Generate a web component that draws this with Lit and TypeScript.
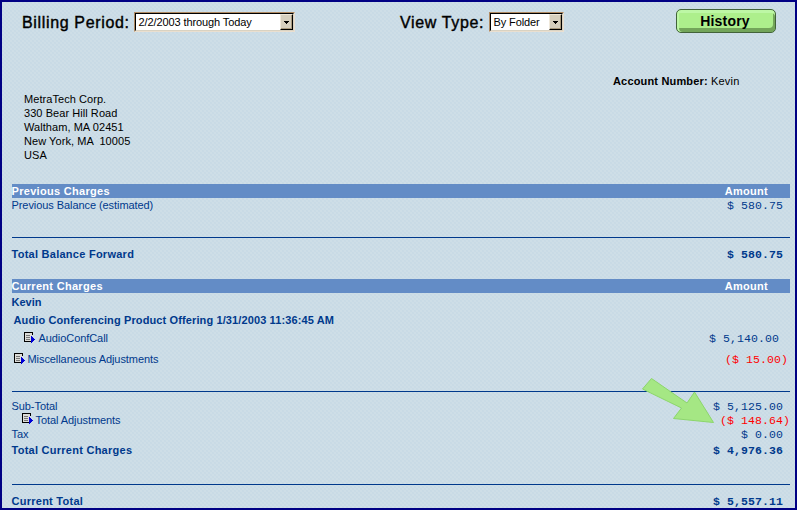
import { LitElement, html, svg, css, nothing } from "lit";
import { customElement, property } from "lit/decorators.js";
import { classMap } from "lit/directives/class-map.js";

interface Line {
  label: string;
  amount?: string;
  kind?: string;
  icon?: boolean;
}

const PREVIOUS: Line[] = [
  { label: "Previous Charges", amount: "Amount", kind: "band" },
  { label: "Previous Balance (estimated)", amount: "$ 580.75" },
];

const CURRENT: Line[] = [
  { label: "Current Charges", amount: "Amount", kind: "band" },
  { label: "Kevin", kind: "folder" },
  { label: "Audio Conferencing Product Offering 1/31/2003 11:36:45 AM", kind: "offering" },
  { label: "AudioConfCall", amount: "$ 5,140.00", kind: "item", icon: true },
  { label: "Miscellaneous Adjustments", amount: "($ 15.00)", kind: "misc", icon: true },
];

const TOTALS: Line[] = [
  { label: "Sub-Total", amount: "$ 5,125.00" },
  { label: "Total Adjustments", amount: "($ 148.64)", kind: "adjust", icon: true },
  { label: "Tax", amount: "$ 0.00" },
  { label: "Total Current Charges", amount: "$ 4,976.36", kind: "total" },
];

@customElement("select-box")
class SelectBox extends LitElement {
  @property() value = "";

  static styles = css`
    :host {
      display: flex;
      box-sizing: border-box;
      height: 20px;
      background: #fff;
      border: 1px solid;
      border-color: #b08a62 #eadfd0 #eadfd0 #b08a62;
    }
    .inner {
      flex: 1;
      display: flex;
      border: 1px solid;
      border-color: #000 #d9d2c2 #d9d2c2 #000;
    }
    .value {
      flex: 1;
      padding-left: 2.5px;
      font: 11px/17px "Liberation Sans", Arial, sans-serif;
      letter-spacing: -0.1px;
      white-space: nowrap;
      color: #000;
    }
    .arrow {
      width: 13px;
      box-sizing: border-box;
      display: flex;
      align-items: center;
      justify-content: center;
      background: #d6cfbe;
      border: 1px solid;
      border-color: #efe8da #000 #000 #efe8da;
      box-shadow: inset -1px -1px #a99a7e;
    }
    svg {
      display: block;
    }
  `;

  render() {
    return html`<div class="inner">
      <span class="value">${this.value}</span>
      <span class="arrow">
        <svg width="5" height="3" shape-rendering="crispEdges"><path d="M0 0h5v1h-1v1h-1v1h-1v-1h-1v-1h-1z" /></svg>
      </span>
    </div>`;
  }
}

@customElement("charge-line")
class ChargeLine extends LitElement {
  @property({ attribute: false }) line: Line = { label: "" };

  static styles = css`
    :host {
      display: block;
    }
    .line {
      display: flex;
      height: 14px;
      padding-right: 7px;
      color: #00398c;
      font: 11px/14px "Liberation Sans", Arial, sans-serif;
      letter-spacing: -0.07px;
      white-space: nowrap;
    }
    .label {
      flex: 1;
      text-indent: -0.5px;
    }
    .amount {
      font: 11.5px/15px "Liberation Mono", "Courier New", monospace;
      letter-spacing: 0.1px;
    }
    .icon {
      width: 11px;
      height: 11px;
      margin-right: 3px;
    }
    .band,
    .folder,
    .offering,
    .total {
      font-weight: bold;
      letter-spacing: 0.26px;
    }
    .band {
      background: #638cc6;
      color: #fff;
      padding-right: 22px;
      letter-spacing: 0.3px;
    }
    .band .amount {
      font: inherit;
      letter-spacing: 0.3px;
    }
    .total .amount {
      font-weight: bold;
    }
    .folder {
      margin-top: 2px;
      letter-spacing: 0;
    }
    .offering {
      margin-top: 4px;
      padding-left: 2px;
      letter-spacing: 0.12px;
    }
    .item {
      margin-top: 4px;
      padding: 0 11px 0 12px;
    }
    .misc {
      margin-top: 7px;
      padding: 0 2px;
    }
    .item .icon,
    .misc .icon {
      margin-top: 1px;
    }
    .item .icon {
      margin-right: 4px;
    }
    .adjust {
      padding: 0 0 0 10px;
    }
    .misc .amount,
    .adjust .amount {
      color: #f00;
    }
    .total {
      margin-top: 2px;
    }
  `;

  render() {
    const { label, amount, kind, icon } = this.line;
    return html`<div class=${classMap({ line: true, [kind ?? "plain"]: true })}>
      ${icon
        ? html`<svg class="icon" viewBox="0 0 11 11" shape-rendering="crispEdges">
            ${svg`<path d="M1 1h7v8h-7z" fill="#dcdcd8"/>
            <path d="M0 0h9v3h-1v-2h-7v8h6v1h-7z" fill="#000"/>
            <path d="M2 3h4v1h-4zM2 5h4v1h-4zM2 7h4v1h-4z" fill="#777"/>
            <path d="M7 4h1v1h1v1h1v1h1v1h-1v1h-1v1h-1v1h-1z" fill="#0000d6"/>`}
          </svg>`
        : nothing}
      <span class="label">${label}</span>
      ${amount ? html`<span class="amount">${amount}</span>` : nothing}
    </div>`;
  }
}

@customElement("app-root")
class AppRoot extends LitElement {
  static styles = css`
    :host {
      display: block;
      position: relative;
      box-sizing: border-box;
      width: 797px;
      height: 510px;
      overflow: hidden;
      border: 2px solid #000084;
      background-color: #cedee7;
      background-image: radial-gradient(circle at 1px 1px, #c8dae6 0.7px, transparent 0.8px),
        radial-gradient(circle at 3px 3px, #c8dae6 0.7px, transparent 0.8px);
      background-size: 4px 4px;
      font-family: "Liberation Sans", Arial, sans-serif;
      color: #000;
    }
    .toolbar {
      display: flex;
      height: 26px;
      padding: 7px 19px 0 20px;
    }
    .caption {
      font-size: 16px;
      line-height: 28px;
      letter-spacing: 0.65px;
      -webkit-text-stroke: 0.4px #000;
      white-space: nowrap;
    }
    .period {
      width: 112px;
    }
    .view {
      width: 89px;
      margin-left: 105px;
    }
    select-box {
      margin-top: 3px;
    }
    .period-box {
      width: 161px;
    }
    .view-box {
      width: 75px;
    }
    .history {
      box-sizing: border-box;
      width: 100px;
      height: 24px;
      margin-left: auto;
      padding: 0 2px 0 0;
      border: 1px solid #42633a;
      border-radius: 5px;
      background: #adef8c;
      box-shadow: inset 0 3px #bdf7a5, inset 2px 0 #bdf7a5, inset -2px -4px #73a55a;
      font: bold 14px/20px "Liberation Sans", Arial, sans-serif;
      letter-spacing: 0.2px;
      color: #000;
    }
    .account {
      padding: 39px 0 0 611px;
      font-size: 11px;
      line-height: 14px;
      letter-spacing: 0.17px;
      white-space: pre;
    }
    .address {
      padding: 4px 0 0 22px;
      font-size: 11px;
      line-height: 14px;
      letter-spacing: 0.06px;
      white-space: pre;
    }
    .statement {
      padding: 22px 5px 0 10px;
    }
    .rule {
      height: 1px;
      background: #00398c;
    }
    .gap-a {
      margin: 25px 0 7px;
    }
    .gap-b {
      margin: 25px 0 7px;
    }
    .gap-c {
      margin: 27px 0 7px;
    }
    .gap-a,
    .gap-c {
      margin-bottom: 9px;
    }
    .spacer {
      height: 18px;
    }
    .pointer {
      position: absolute;
      left: 640px;
      top: 374px;
    }
  `;

  private lines(list: Line[]) {
    return list.map((line) => html`<charge-line .line=${line}></charge-line>`);
  }

  render() {
    return html`
      <div class="toolbar">
        <span class="caption period">Billing Period:</span>
        <select-box class="period-box" value="2/2/2003 through Today"></select-box>
        <span class="caption view">View Type:</span>
        <select-box class="view-box" value="By Folder"></select-box>
        <button class="history">History</button>
      </div>
      <div class="account"><b>Account Number:</b> Kevin</div>
      <div class="address">${["MetraTech Corp.", "330 Bear Hill Road", "Waltham, MA 02451", "New York, MA  10005", "USA"].join("\n")}</div>
      <div class="statement">
        ${this.lines(PREVIOUS)}
        <div class="rule gap-a"></div>
        ${this.lines([{ label: "Total Balance Forward", amount: "$ 580.75", kind: "total" }])}
        <div class="spacer"></div>
        ${this.lines(CURRENT)}
        <div class="rule gap-b"></div>
        ${this.lines(TOTALS)}
        <div class="rule gap-c"></div>
        ${this.lines([{ label: "Current Total", amount: "$ 5,557.11", kind: "total" }])}
      </div>
      <svg class="pointer" width="76" height="54">
        <path d="M9.500 2.500L45 27L52.500 16L71.500 46.500L31.500 42.500L39.500 32L.500 13Z" fill="#a5e784" stroke="#8cd66b" />
      </svg>
    `;
  }
}
